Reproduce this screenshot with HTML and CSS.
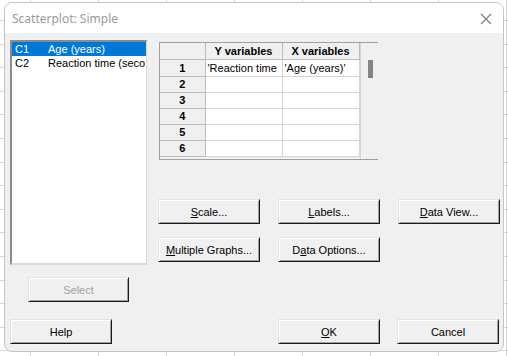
FILE: index.html
```html
<!DOCTYPE html>
<html>
<head>
<meta charset="utf-8">
<link rel="stylesheet" href="styles.css">
</head>
<body>
<div class="dialog">
  <div class="titlebar">
    <span class="title">Scatterplot: Simple</span>
    <svg class="close" width="12" height="12" viewBox="0 0 12 12"><path d="M1 1 L11 11 M11 1 L1 11" stroke="#7a7a7a" stroke-width="1.1" fill="none"/></svg>
  </div>
  <div class="content">
    <div class="main">
      <div class="leftcol">
        <div class="listbox">
          <div class="item selected"><span class="cid">C1</span><span class="cname">Age (years)</span></div>
          <div class="item"><span class="cid">C2</span><span class="cname">Reaction time (seco</span></div>
        </div>
        <button class="btn select" disabled>Select</button>
      </div>
      <div class="rightcol">
        <div class="gridframe">
          <table class="vars">
            <colgroup><col class="c0"><col class="c1"><col class="c2"></colgroup>
            <tr class="hdr"><th class="corner"></th><th>Y variables</th><th>X variables</th></tr>
            <tr class="r1"><th>1</th><td>'Reaction time</td><td>'Age (years)'</td></tr>
            <tr><th>2</th><td></td><td></td></tr>
            <tr><th>3</th><td></td><td></td></tr>
            <tr><th>4</th><td></td><td></td></tr>
            <tr><th>5</th><td></td><td></td></tr>
            <tr><th>6</th><td></td><td></td></tr>
          </table>
          <div class="vscroll"><div class="thumb"></div></div>
        </div>
        <div class="btnrow first">
          <button class="btn"><u>S</u>cale...</button>
          <button class="btn"><u>L</u>abels...</button>
          <button class="btn"><u>D</u>ata View...</button>
        </div>
        <div class="btnrow second">
          <button class="btn"><u>M</u>ultiple Graphs...</button>
          <button class="btn">D<u>a</u>ta Options...</button>
        </div>
      </div>
    </div>
    <div class="bottomrow">
      <button class="btn">Help</button>
      <div class="spacer"></div>
      <button class="btn"><u>O</u>K</button>
      <button class="btn cancel">Cancel</button>
    </div>
  </div>
</div>
</body>
</html>
```
FILE: styles.css
```css
html, body {
  margin: 0;
  padding: 0;
}
body {
  width: 508px;
  height: 356px;
  overflow: hidden;
  background-color: #ffffff;
  background-image:
    repeating-linear-gradient(90deg, transparent 0 30px, #d6d6d6 30px 31px, transparent 31px 68px),
    repeating-linear-gradient(180deg, transparent 0 20px, #d6d6d6 20px 21px, transparent 21px 23.6px);
  font-family: "Liberation Sans", Arial, sans-serif;
  font-size: 11px;
  color: #000;
}
.dialog {
  margin: 2px 0 0 4px;
  width: 498px;
  height: 348px;
  border: 1px solid #c4c4c4;
  border-radius: 8px;
  overflow: hidden;
  background: #f0f0f0;
  display: flex;
  flex-direction: column;
}
.titlebar {
  height: 30px;
  background: #ffffff;
  display: flex;
  align-items: center;
  padding: 0 0 0 7px;
  flex: none;
}
.title {
  font-family: "Noto Sans", "Open Sans", sans-serif;
  font-size: 12px;
  color: #9a9a9a;
  flex: 1;
  margin-top: 1px;
}
.close {
  margin-right: 11px;
  margin-top: 1px;
}
.content {
  flex: 1;
  padding: 7px 0 0 5px;
}
.main {
  display: flex;
}
.leftcol {
  width: 137px;
  display: flex;
  flex-direction: column;
}
.listbox {
  height: 221px;
  background: #fff;
  border-style: solid;
  border-width: 2px 1px 2px 2px;
  border-color: #8c8c8c #d8d8d8 #d8d8d8 #8c8c8c;
  overflow: hidden;
}
.item {
  display: flex;
  height: 14px;
  line-height: 14px;
  white-space: nowrap;
  overflow: hidden;
}
.item.selected {
  background: #0078d7;
  color: #fff;
}
.cid {
  width: 33px;
  padding-left: 3px;
  flex: none;
}
.cname {
  overflow: hidden;
}
.btn {
  font-family: "Liberation Sans", Arial, sans-serif;
  font-size: 11px;
  color: #000;
  background: #f0f0f0;
  width: 102px;
  height: 25px;
  padding: 0;
  border-style: solid;
  border-width: 1px;
  border-color: #e3e3e3 #1a1a1a #1a1a1a #e3e3e3;
  box-shadow: inset 1px 1px #ffffff, inset -1px -1px #a0a0a0;
  border-radius: 0;
  flex: none;
}
.btn u {
  text-decoration: underline;
  text-underline-offset: 1px;
}
.btn.select {
  margin: 12px 0 0 18px;
  width: 101px;
  color: #a0a0a0;
}
.rightcol {
  margin-left: 11px;
  display: flex;
  flex-direction: column;
}
.gridframe {
  margin: 2px 0 0 1px;
  width: 217px;
  height: 116px;
  border: 1px solid #a0a0a0;
  background: #f0f0f0;
  display: flex;
  align-items: flex-start;
}
.vars {
  border-collapse: collapse;
  table-layout: fixed;
  width: 199px;
}
.c0 { width: 45px; }
.c1 { width: 77px; }
.c2 { width: 77px; }
.vars th, .vars td {
  height: 15px;
  padding: 0;
  border: 1px solid #d4d4d4;
  white-space: nowrap;
  overflow: hidden;
  line-height: 15px;
}
.vars tr:first-child th {
  border-top: none;
}
.vars th:first-child {
  border-left: none;
}
.vars th {
  background: #f0f0f0;
  font-weight: bold;
  text-align: center;
  border-color: #ffffff #bcbcbc #bcbcbc #ffffff;
}
.vars tr.hdr th {
  height: 16px;
  line-height: 16px;
}
.vars td {
  background: #fff;
  text-align: left;
  padding-left: 2px;
}
.vars tr.r1 th, .vars tr.r1 td {
  height: 16px;
}
.vscroll {
  width: 18px;
  height: 116px;
  border-left: 1px solid #d4d4d4;
  background: #f0f0f0;
  flex: none;
}
.thumb {
  width: 5px;
  height: 18px;
  margin: 17px 0 0 7px;
  background: #858585;
}
.btnrow {
  display: flex;
  column-gap: 18px;
}
.btnrow.first {
  margin-top: 39px;
}
.btnrow.second {
  margin-top: 13px;
}
.bottomrow {
  display: flex;
  margin-top: 17px;
}
.spacer {
  width: 166px;
}
.bottomrow .cancel {
  margin-left: 17px;
}
```
